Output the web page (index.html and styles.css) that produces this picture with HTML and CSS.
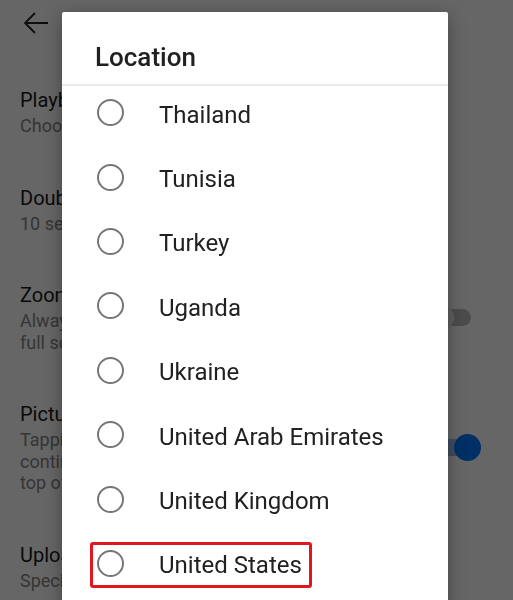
FILE: index.html
```html
<!DOCTYPE html>
<html lang="en">
<head>
    <meta charset="UTF-8">
    <meta name="viewport" content="width=device-width, initial-scale=1.0">
    <title>General settings</title>
    <link rel="stylesheet" href="styles.css">
</head>
<body>
    <header class="topbar">
        <svg class="back" width="26" height="22" viewBox="0 0 26 22">
            <path d="M25 11H2M12 1L2 11l10 10" fill="none" stroke="#222" stroke-width="1.8"/>
        </svg>
    </header>

    <div class="settings">
        <div class="setting">
            <div class="setting-text">
                <div class="setting-title">Playback in feeds</div>
                <div class="setting-sub">Choose how videos play while browsing</div>
            </div>
        </div>
        <div class="setting">
            <div class="setting-text">
                <div class="setting-title">Double-tap to seek</div>
                <div class="setting-sub">10 seconds</div>
            </div>
        </div>
        <div class="setting">
            <div class="setting-text">
                <div class="setting-title">Zoom to fill screen</div>
                <div class="setting-sub">Always zoom so that videos fill the<br>full screen</div>
            </div>
            <div class="switch"><span class="track"></span><span class="knob"></span></div>
        </div>
        <div class="setting">
            <div class="setting-text">
                <div class="setting-title">Picture-in-picture</div>
                <div class="setting-sub">Tapping home while a video is playing will<br>continue playing the video in a small window on<br>top of other apps</div>
            </div>
            <div class="switch on"><span class="track"></span><span class="knob"></span></div>
        </div>
        <div class="setting">
            <div class="setting-text">
                <div class="setting-title">Uploads</div>
                <div class="setting-sub">Specify your upload preferences</div>
            </div>
        </div>
    </div>

    <div class="scrim"></div>

    <!-- Location dialog -->
    <div class="dialog">
        <div class="dialog-title">Location</div>
        <div class="dialog-body">
            <ul class="options">
                <li class="option"><span class="radio"></span><span class="label">Thailand</span></li>
                <li class="option"><span class="radio"></span><span class="label">Tunisia</span></li>
                <li class="option"><span class="radio"></span><span class="label">Turkey</span></li>
                <li class="option"><span class="radio"></span><span class="label">Uganda</span></li>
                <li class="option"><span class="radio"></span><span class="label">Ukraine</span></li>
                <li class="option"><span class="radio"></span><span class="label">United Arab Emirates</span></li>
                <li class="option"><span class="radio"></span><span class="label">United Kingdom</span></li>
                <li class="option selected"><span class="radio"></span><span class="label">United States</span><span class="highlight"></span></li>
            </ul>
        </div>
    </div>
</body>
</html>
```

FILE: styles.css
```css
body {
    font-family: Roboto, "Liberation Sans", sans-serif;
    background-color: #fff;
    margin: 0;
    padding: 0;
    overflow: hidden;
}
.topbar {
    height: 63px;
    box-sizing: border-box;
    padding: 12px 0 0 23px;
}
.back {
    display: block;
}
.setting {
    display: flex;
    align-items: center;
    padding: 24px 32px 24px 20px;
}
.setting-text {
    flex: 1;
}
.setting-title {
    font-size: 20px;
    line-height: 26px;
    color: #1a1a1a;
}
.setting-sub {
    margin-top: 2px;
    font-size: 18px;
    line-height: 21.5px;
    color: #868686;
}
.switch {
    position: relative;
    width: 54px;
    height: 27px;
    flex-shrink: 0;
}
.switch .track {
    position: absolute;
    left: 10px;
    right: 10px;
    top: 5px;
    height: 17px;
    border-radius: 9px;
    background-color: #bdbdbd;
}
.switch .knob {
    position: absolute;
    left: 0;
    top: 0;
    width: 27px;
    height: 27px;
    border-radius: 50%;
    background-color: #f1f1f1;
}
.switch.on .track {
    background-color: #9fc3f5;
}
.switch.on .knob {
    left: auto;
    right: 0;
    background-color: #0078ff;
}
.scrim {
    position: fixed;
    left: 0;
    top: 0;
    width: 100%;
    height: 100%;
    background-color: rgba(0, 0, 0, 0.6);
}
.dialog {
    position: fixed;
    left: 62px;
    top: 12px;
    width: 386px;
    height: 640px;
    background-color: #fff;
    box-shadow: 0 4px 18px rgba(0, 0, 0, 0.35);
    border-radius: 2px;
}
.dialog-title {
    height: 74px;
    box-sizing: border-box;
    padding: 29px 33px 0;
    font-size: 26px;
    line-height: 32px;
    font-weight: 500;
    color: #212121;
    border-bottom: 2px solid #ebebeb;
}
.dialog-body {
    overflow: hidden;
}
.options {
    list-style-type: none;
    margin: -5.5px 0 0;
    padding: 0;
}
.option {
    position: relative;
    display: flex;
    align-items: center;
    height: 64.4px;
    padding-left: 35px;
    font-size: 24px;
    color: #212121;
}
.label {
    margin-top: 4px;
}
.radio {
    width: 27px;
    height: 27px;
    box-sizing: border-box;
    border: 2.6px solid #767676;
    border-radius: 50%;
    margin-right: 35px;
    flex-shrink: 0;
}
.highlight {
    position: absolute;
    left: 28px;
    top: 10.5px;
    width: 222px;
    height: 46px;
    box-sizing: border-box;
    border: 3px solid #e2161e;
    border-radius: 3px;
}
```
